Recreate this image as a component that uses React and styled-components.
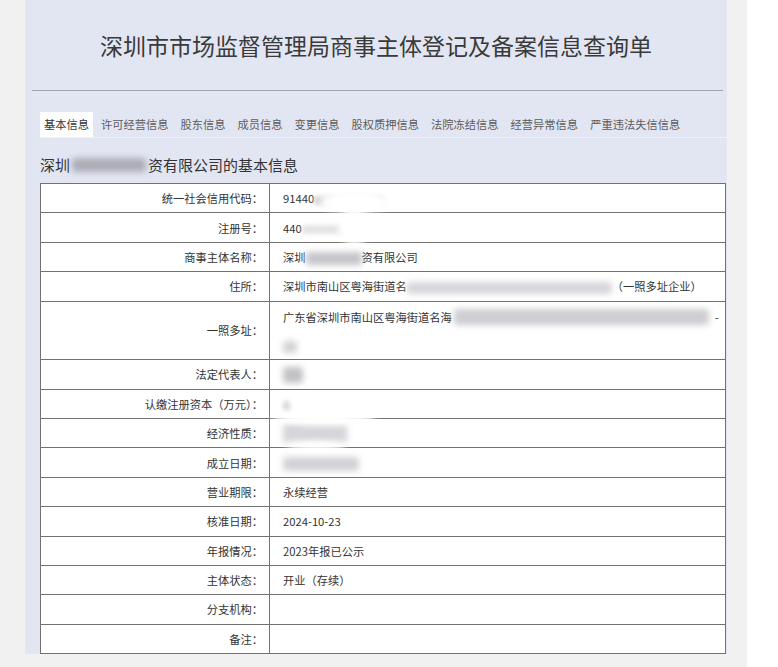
import React from 'react';
import styled, { createGlobalStyle } from 'styled-components';

const GlobalStyle = createGlobalStyle`
  html, body {
    margin: 0;
    padding: 0;
    background: #fff;
  }

  body {
    font-family: "Noto Sans CJK SC", "Noto Sans", sans-serif;
    color: #333;
  }
`;

const Page = styled.div`
  width: 747px;
  height: 667px;
  box-sizing: border-box;
  padding: 0 20px 13px 25px;
  background: #f1f1f1;
`;

const Panel = styled.div`
  height: 654px;
  display: flex;
  flex-direction: column;
  background: #e2e6f3;
  overflow: hidden;
`;

const Header = styled.h1`
  margin: 0;
  height: 91px;
  display: flex;
  align-items: center;
  justify-content: center;
  font-size: 23px;
  font-weight: 400;
  color: #3a3a3a;
`;

const Divider = styled.hr`
  margin: 0 4px 0 7px;
  height: 0;
  border: 0;
  border-top: 1px solid #9ea2ad;
`;

const TabBar = styled.nav`
  display: flex;
  gap: 4px;
  margin: 21px 0 0 15px;
  border-bottom: 1px solid #eef1f9;
`;

const Tab = styled.span`
  height: 25px;
  padding: 0 4px;
  line-height: 25px;
  font-size: 11.25px;
  color: ${p => (p.$active ? '#333' : '#5c5c5c')};
  background: ${p => (p.$active ? '#fff' : 'transparent')};
`;

const Subtitle = styled.h2`
  margin: 0 0 0 15px;
  padding: 17px 0 8px;
  font-size: 15px;
  line-height: 20px;
  font-weight: 400;
  color: #333;
  display: flex;
  align-items: center;
`;

const TableWrap = styled.div`
  position: relative;
  margin-left: 15px;
  width: 686px;
`;

const Table = styled.table`
  width: 100%;
  border-collapse: collapse;
  table-layout: fixed;
  background: #fff;
`;

const Row = styled.tr`
  height: ${p => (p.$tall ? 58.75 : 29.375)}px;
`;

const Label = styled.th`
  width: 222px;
  padding: 0 6px 0 0;
  border: 1px solid #727272;
  text-align: right;
  font-size: 11.25px;
  font-weight: 400;
  color: #333;
  white-space: nowrap;
`;

const Value = styled.td`
  padding: ${p => (p.$top ? '5px 4px 0 13px' : '0 4px 0 13px')};
  border: 1px solid #727272;
  vertical-align: ${p => (p.$top ? 'top' : 'middle')};
  font-size: 11.25px;
  color: #333;
  white-space: nowrap;
`;

const Line = styled.div`
  display: flex;
  align-items: center;
  height: 20px;
  margin-bottom: ${p => p.$gap || 0}px;
`;

const Redact = styled.span`
  display: inline-block;
  vertical-align: middle;
  width: ${p => p.$w}px;
  height: ${p => p.$h || 11}px;
  margin: ${p => p.$m || '0'};
  background: ${p => p.$tone || '#cfcfd3'};
  border-radius: 3px;
  filter: blur(${p => p.$blur || 3}px);
`;

const Smudge = styled.div`
  position: absolute;
  left: ${p => p.$x}px;
  top: ${p => p.$y}px;
  width: ${p => p.$w}px;
  height: ${p => p.$h}px;
  background: #fff;
  border-radius: 50%;
  filter: blur(3px);
`;

const tabs = [
  '基本信息',
  '许可经营信息',
  '股东信息',
  '成员信息',
  '变更信息',
  '股权质押信息',
  '法院冻结信息',
  '经营异常信息',
  '严重违法失信信息',
];

export default function App() {
  return (
    <>
      <GlobalStyle />
      <Page>
        <Panel>
          <Header>深圳市市场监督管理局商事主体登记及备案信息查询单</Header>
          <Divider />
          <TabBar>
            {tabs.map((t, i) => (
              <Tab key={t} $active={i === 0}>
                {t}
              </Tab>
            ))}
          </TabBar>
          <Subtitle>
            深圳
            <Redact $w={74} $h={14} $tone="#acacb6" $m="0 2px" />
            资有限公司的基本信息
          </Subtitle>
          <TableWrap>
            <Table>
              <tbody>
                <Row>
                  <Label>统一社会信用代码：</Label>
                  <Value>
                    91440
                    <Redact $w={70} $h={9} $tone="#d4d4d6" $blur={2} />
                  </Value>
                </Row>
                <Row>
                  <Label>注册号：</Label>
                  <Value>
                    440
                    <Redact $w={62} $h={9} $tone="#e4e4e6" $blur={2} />
                  </Value>
                </Row>
                <Row>
                  <Label>商事主体名称：</Label>
                  <Value>
                    深圳
                    <Redact $w={56} $h={13} $tone="#c4c4ca" />
                    资有限公司
                  </Value>
                </Row>
                <Row>
                  <Label>住所：</Label>
                  <Value>
                    深圳市南山区粤海街道名
                    <Redact $w={205} $h={12} $tone="#d6d6da" />
                    （一照多址企业）
                  </Value>
                </Row>
                <Row $tall>
                  <Label>一照多址：</Label>
                  <Value $top>
                    <Line $gap={10}>
                      广东省深圳市南山区粤海街道名海
                      <Redact $w={255} $h={16} $tone="#cdcdd2" $m="0 6px 0 2px" />-
                    </Line>
                    <Line>
                      <Redact $w={14} $h={12} $tone="#d2d2d6" />
                    </Line>
                  </Value>
                </Row>
                <Row>
                  <Label>法定代表人：</Label>
                  <Value>
                    <Redact $w={20} $h={16} $tone="#c2c2c6" />
                  </Value>
                </Row>
                <Row>
                  <Label>认缴注册资本（万元）：</Label>
                  <Value>
                    <Redact $w={7} $h={10} $tone="#d8d8da" $blur={2} />
                  </Value>
                </Row>
                <Row>
                  <Label>经济性质：</Label>
                  <Value>
                    <Redact $w={64} $h={20} $tone="#d6d6da" />
                  </Value>
                </Row>
                <Row>
                  <Label>成立日期：</Label>
                  <Value>
                    <Redact $w={76} $h={14} $tone="#d2d2d6" />
                  </Value>
                </Row>
                <Row>
                  <Label>营业期限：</Label>
                  <Value>永续经营</Value>
                </Row>
                <Row>
                  <Label>核准日期：</Label>
                  <Value>2024-10-23</Value>
                </Row>
                <Row>
                  <Label>年报情况：</Label>
                  <Value>2023年报已公示</Value>
                </Row>
                <Row>
                  <Label>主体状态：</Label>
                  <Value>开业（存续）</Value>
                </Row>
                <Row>
                  <Label>分支机构：</Label>
                  <Value />
                </Row>
                <Row>
                  <Label>备注：</Label>
                  <Value />
                </Row>
              </tbody>
            </Table>
            <Smudge $x={280} $y={8} $w={70} $h={22} />
            <Smudge $x={298} $y={26} $w={32} $h={36} />
            <Smudge $x={232} $y={228} $w={104} $h={14} />
            <Smudge $x={246} $y={258} $w={60} $h={10} />
          </TableWrap>
        </Panel>
      </Page>
    </>
  );
}
